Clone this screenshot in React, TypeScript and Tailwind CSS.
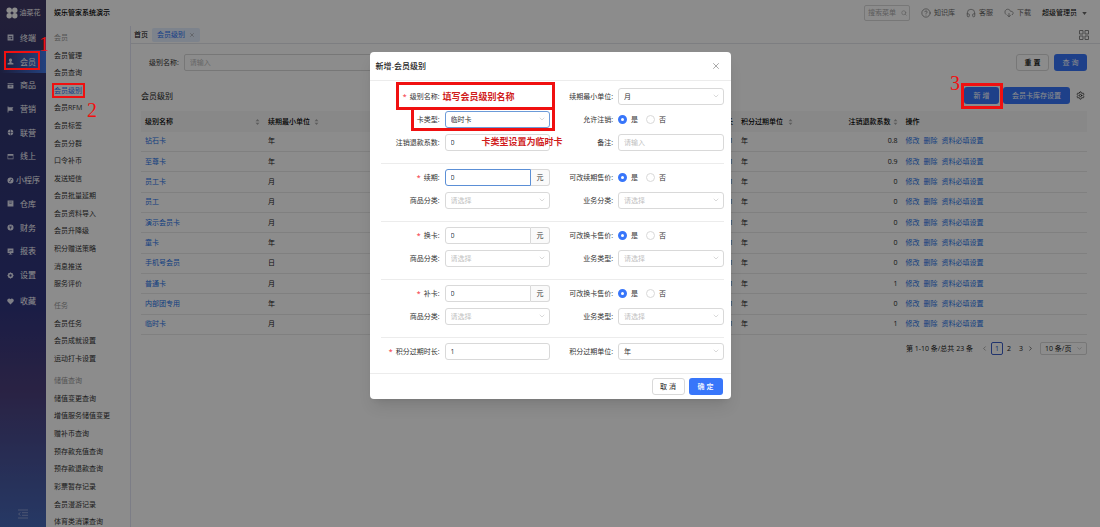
import { useState } from "react";
import type { ReactNode } from "react";
import clsx from "clsx";
import {
  ChevronDown,
  ChevronLeft,
  ChevronRight,
  CircleHelp,
  CloudDownload,
  Headphones,
  Search,
  Settings,
  X,
} from "lucide-react";

const railItems = [
  { name: "终端", icon: <path d="M1 1h10v10H1zM3 3.5v1h6v-1zM3 6v3h1V6zM6 6v3h3V6z" fillRule="evenodd" /> },
  { name: "会员", icon: <path d="M6 1a2.7 2.7 0 0 1 1.5 5v1.5L11 9v2H1V9l3.500-1.500V6A2.700 2.700 0 0 1 6 1z" /> },
  { name: "商品", icon: <path d="M1 2h10v2H1zM1 5h10v6H1zM4 6.500v1h4v-1z" fillRule="evenodd" /> },
  { name: "营销", icon: <path d="M1 1h1.500v1H11L9 5l2 3H2.500v3H1z" /> },
  { name: "联营", icon: <path d="M5.500 1v4.500H1A5 5 0 0 1 5.500 1zM6.500 1A5 5 0 0 1 11 5.500H6.500zM1 6.500h4.500V11A5 5 0 0 1 1 6.500zM6.500 6.500H11A5 5 0 0 1 6.500 11z" /> },
  { name: "线上", icon: <path d="M1 1.500h10v9H1zM2 4.500v5h8v-5z" fillRule="evenodd" /> },
  { name: "小程序", icon: <path d="M6 .8a5.200 5.200 0 1 1 0 10.400A5.200 5.200 0 0 1 6 .8zM8.500 3C6 3 6 5 5.500 6.500S4 8 3.500 7.500V9C6 9 6 7.500 6.500 6S8 4.500 8.500 4.500z" fillRule="evenodd" /> },
  { name: "仓库", icon: <path d="M1 1h10v10H1zM3 3v1h6V3zM4 6v1h4V6z" fillRule="evenodd" /> },
  { name: "财务", icon: <path d="M6 .8a5.200 5.200 0 1 1 0 10.400A5.200 5.200 0 0 1 6 .8zM3.500 3l2 2.500H4v1h1.500V9h1V6.500H8v-1H6.500l2-2.500h-1L6 4.800 4.500 3z" fillRule="evenodd" /> },
  { name: "报表", icon: <path d="M1 1h10v7.500H7V10h2v1H3v-1h2V8.500H1zM3 5v1.500L5.500 5 7 6l2.500-2.500h-1L7 4.800 5.500 3.800z" fillRule="evenodd" /> },
  { name: "设置", icon: <path d="M6 .5l1.500 1.300 2-.1.500 2L11.500 6 10 8l-.5 2-2 .1L6 11.500l-1.500-1.400-2-.1L2 8 .5 6 2 4l.5-2.200 2 .1zM6 4a2 2 0 1 0 0 4 2 2 0 0 0 0-4z" fillRule="evenodd" /> },
];

const menuMember = [
  "会员管理",
  "会员查询",
  "会员级别",
  "会员RFM",
  "会员标签",
  "会员分群",
  "口令补币",
  "发送短信",
  "会员批量延期",
  "会员资料导入",
  "会员升降级",
  "积分赠送策略",
  "消息推送",
  "服务评价",
];

const menuTask = ["会员任务", "会员成就设置", "运动打卡设置"];

const menuStored = [
  "储值变更查询",
  "增值服务储值变更",
  "赠补币查询",
  "预存款充值查询",
  "预存款退款查询",
  "彩票暂存记录",
  "会员漫游记录",
  "体育类消课查询",
];

const levels = [
  { id: 1, name: "钻石卡", unit: "年", rate: "0.8" },
  { id: 2, name: "至尊卡", unit: "年", rate: "0.9" },
  { id: 3, name: "员工卡", unit: "月", rate: "0" },
  { id: 4, name: "员工", unit: "月", rate: "0" },
  { id: 5, name: "演示会员卡", unit: "月", rate: "0" },
  { id: 6, name: "童卡", unit: "年", rate: "0" },
  { id: 7, name: "手机号会员", unit: "日", rate: "0" },
  { id: 8, name: "普通卡", unit: "月", rate: "1" },
  { id: 9, name: "内部团专用", unit: "年", rate: "0" },
  { id: 10, name: "临时卡", unit: "月", rate: "1" },
];

function MenuLink({ name }: { name: string }) {
  return (
    <li className="flex items-center">
      <a
        href="#"
        className={clsx(
          "whitespace-nowrap",
          name === "会员级别" ? "text-[#2b74f5]" : "text-[#333]",
        )}
      >
        {name}
      </a>
    </li>
  );
}

function MenuTitle({ children }: { children: ReactNode }) {
  return (
    <h2 className="flex h-[18px] items-center text-[#999]">{children}</h2>
  );
}

function Rail() {
  return (
    <nav className="flex w-[46px] shrink-0 flex-col bg-[linear-gradient(to_bottom,#413a66,#30356f_18%,#30357f_58%,#4c3f7c_74%,#4668b8)] text-[8px] text-white">
      <div className="flex h-[26px] items-center justify-center gap-0.5 text-[7px]">
        <svg viewBox="0 0 12 12" className="size-3 fill-white" aria-hidden="true">
          <circle cx="3.200" cy="3.200" r="2.700" />
          <circle cx="8.800" cy="3.200" r="2.700" />
          <circle cx="3.200" cy="8.800" r="2.700" />
          <circle cx="8.800" cy="8.800" r="2.700" />
        </svg>
        油菜花
      </div>
      <ul className="grid h-[261px] auto-rows-fr">
        {railItems.map((item) => (
          <li key={item.name}>
            <a
              href="#"
              className={clsx(
                "flex h-full items-center pl-[7px] whitespace-nowrap",
                item.name.length > 2 ? "gap-0.5" : "gap-[6px]",
                item.name === "会员" &&
                  "bg-linear-to-r from-transparent to-[#4078e8]",
              )}
            >
              <svg viewBox="0 0 12 12" className="size-[7px] shrink-0 fill-[#e4e6f4]" aria-hidden="true">
                {item.icon}
              </svg>
              {item.name}
            </a>
          </li>
        ))}
      </ul>
      <a href="#" className="mt-0.5 flex h-6 items-center gap-[6px] pl-[7px]">
        <svg viewBox="0 0 12 12" className="size-[7px] fill-[#e4e6f4]" aria-hidden="true">
          <path d="M6 11L1.300 6.300A3 3 0 0 1 6 2.200a3 3 0 0 1 4.700 4.100z" />
        </svg>
        收藏
      </a>
      <button className="mt-auto mb-2 ml-[18px] size-[10px]" aria-label="收起菜单">
        <svg viewBox="0 0 10 10" className="size-full stroke-[#8c9cd0]" fill="none">
          <path d="M0 1h10M4 3.700h6M4 6.300h6M0 9h10M2.500 3.500L.5 5l2 1.500" />
        </svg>
      </button>
    </nav>
  );
}

function SubMenu() {
  return (
    <nav className="w-[85px] shrink-0 border-r border-[#e2e4f4] pt-[3px] pl-2">
      <MenuTitle>会员</MenuTitle>
      <ul className="grid h-[246px] auto-rows-fr">
        {menuMember.map((name) => (
          <MenuLink key={name} name={name} />
        ))}
      </ul>
      <div className="mt-1">
        <MenuTitle>任务</MenuTitle>
      </div>
      <ul className="grid h-[53px] auto-rows-fr">
        {menuTask.map((name) => (
          <MenuLink key={name} name={name} />
        ))}
      </ul>
      <div className="mt-1">
        <MenuTitle>储值查询</MenuTitle>
      </div>
      <ul className="grid h-[141px] auto-rows-fr">
        {menuStored.map((name) => (
          <MenuLink key={name} name={name} />
        ))}
      </ul>
    </nav>
  );
}

function TopBar() {
  return (
    <header className="flex h-[26px] shrink-0 items-center justify-between pr-[13px] pl-2">
      <h1 className="font-medium text-black">娱乐管家系统演示</h1>
      <div className="flex items-center gap-[11px] text-[#666]">
        <div className="flex h-4 w-[46px] items-center rounded-xs border border-[#d9d9d9] pr-0.5 pl-[3px]">
          <input
            aria-label="搜索菜单"
            placeholder="搜索菜单"
            className="w-full min-w-0 placeholder:text-[#aaa]"
          />
          <Search className="size-[6px] shrink-0 text-[#999]" />
        </div>
        <a href="#" className="flex items-center gap-[3px]">
          <CircleHelp className="size-[10px]" strokeWidth={1.5} />
          知识库
        </a>
        <a href="#" className="flex items-center gap-[3px]">
          <Headphones className="size-[10px]" strokeWidth={1.5} />
          客服
        </a>
        <a href="#" className="flex items-center gap-[3px]">
          <CloudDownload className="size-[10px]" strokeWidth={1.5} />
          下载
        </a>
        <button className="flex items-center gap-[5px] text-black">
          超级管理员
          <svg viewBox="0 0 6 4" className="h-[3px] w-[5px] fill-[#666]" aria-hidden="true">
            <path d="M0 0h6L3 4z" />
          </svg>
        </button>
      </div>
    </header>
  );
}

function TabBar() {
  return (
    <div className="flex h-[18px] shrink-0 items-center gap-1 border-b border-[#e4e6ec] pr-[11px] pl-[3px]">
      <a href="#" className="text-black">
        首页
      </a>
      <div className="flex h-[14px] items-center gap-1 rounded-xs bg-[#e4eeff] px-[5px] text-[#2b74f5]">
        <a href="#">会员级别</a>
        <button aria-label="关闭会员级别">
          <X className="size-[6px] text-[#888]" />
        </button>
      </div>
      <button className="ml-auto" aria-label="全部标签">
        <svg viewBox="0 0 10 10" className="size-[10px] stroke-[#888]" fill="none">
          <path d="M.5.5h3.500V4H.5zM6 .5h3.500V4H6zM.5 6h3.500v3.500H.5zM6 6h3.500v3.500H6z" />
        </svg>
      </button>
    </div>
  );
}

function SortIcon() {
  return (
    <svg viewBox="0 0 6 8" className="h-[6px] w-[5px] fill-[#aaa]" aria-hidden="true">
      <path d="M3 0l2.500 3h-5zM3 8L.5 5h5z" />
    </svg>
  );
}

function LevelTable() {
  return (
    <table className="mt-[7px] h-[224px] w-full table-fixed text-left text-[#222]">
      <colgroup>
        <col className="w-[13%]" />
        <col className="w-[14%]" />
        <col className="w-[36%]" />
        <col className="w-[8%]" />
        <col className="w-[9.4%]" />
        <col />
      </colgroup>
      <thead>
        <tr className="h-[21px] bg-[#f7f7f7] text-black *:px-1 *:font-medium">
          <th>
            <span className="flex items-center justify-between">
              级别名称
              <SortIcon />
            </span>
          </th>
          <th>
            <span className="flex items-center gap-1">
              续期最小单位
              <SortIcon />
            </span>
          </th>
          <th className="text-right">积分过期时长</th>
          <th>
            <span className="flex items-center gap-[5px] whitespace-nowrap">
              积分过期单位
              <SortIcon />
            </span>
          </th>
          <th>
            <span className="flex items-center justify-end gap-0.5 whitespace-nowrap">
              注销退款系数
              <SortIcon />
            </span>
          </th>
          <th>操作</th>
        </tr>
      </thead>
      <tbody>
        {levels.map((level) => (
          <tr key={level.id} className="border-b border-[#eaeaea] *:px-1">
            <td>
              <a href="#" className="text-[#2472ea]">
                {level.name}
              </a>
            </td>
            <td>{level.unit}</td>
            <td className="text-right">1</td>
            <td>年</td>
            <td className="text-right">{level.rate}</td>
            <td>
              <div className="flex gap-1 text-[#2472ea]">
                <a href="#">修改</a>
                <a href="#">删除</a>
                <a href="#">资料必填设置</a>
              </div>
            </td>
          </tr>
        ))}
      </tbody>
    </table>
  );
}

function Pagination() {
  return (
    <div className="mt-[7px] flex items-center justify-end text-[#222]">
      <span className="mr-2">第 1-10 条/总共 23 条</span>
      <button aria-label="上一页">
        <ChevronLeft className="size-[7px] text-[#777]" />
      </button>
      <button className="ml-[3px] h-[13px] w-3 rounded-xs border border-[#3d5fc8] text-[#2b50c0]">
        1
      </button>
      <button className="h-[13px] w-3">2</button>
      <button className="h-[13px] w-3">3</button>
      <button aria-label="下一页" className="mr-[6px]">
        <ChevronRight className="size-[7px]" />
      </button>
      <div className="relative">
        <select
          aria-label="每页条数"
          className="h-[13px] w-[47px] appearance-none rounded-xs border border-[#d9d9d9] pl-1"
        >
          <option>10 条/页</option>
          <option>20 条/页</option>
        </select>
        <ChevronDown className="pointer-events-none absolute top-[3px] right-1 size-[7px] text-[#aaa]" />
      </div>
    </div>
  );
}

function LevelPage() {
  return (
    <main className="flex-1 pt-[10px] pr-[13px] pl-[10px]">
      <div className="flex items-center gap-[5px] pl-2">
        <label htmlFor="search-name" className="text-[#333]">
          级别名称:
        </label>
        <input
          id="search-name"
          placeholder="请输入"
          className="h-[17px] w-[200px] rounded-xs border border-[#d9d9d9] px-[5px] placeholder:text-[#bbb]"
        />
        <button className="ml-auto h-[17px] w-[33px] rounded-[3px] border border-[#d9d9d9] font-medium text-black">
          重 置
        </button>
        <button className="h-[17px] w-[33px] rounded-[3px] bg-[#3876fa] text-white">
          查 询
        </button>
      </div>
      <div className="mt-4 flex items-center gap-1">
        <h2 className="mr-auto text-[8px] text-[#222]">会员级别</h2>
        <button className="h-[17px] w-[35px] rounded-[3px] bg-[#3876fa] text-white">
          新 增
        </button>
        <button className="h-[17px] w-[67px] rounded-[3px] bg-[#3876fa] text-white">
          会员卡库存设置
        </button>
        <button aria-label="列设置" className="mr-0.5 ml-[2px]">
          <Settings className="size-[9px] text-[#222]" />
        </button>
      </div>
      <LevelTable />
      <Pagination />
    </main>
  );
}

type FieldProps = {
  id?: string;
  label: string;
  required?: boolean;
  children: ReactNode;
};

function Field({ id, label, required, children }: FieldProps) {
  return (
    <div className="flex h-[17px] items-center gap-[5px]">
      <label
        htmlFor={id}
        className="w-[63px] shrink-0 text-right whitespace-nowrap"
      >
        {required && <span className="mr-[3px] text-[#f5222d]">*</span>}
        {label}:
      </label>
      {children}
    </div>
  );
}

type SelectBoxProps = {
  id: string;
  options?: string[];
  active?: boolean;
};

function SelectBox({ id, options, active }: SelectBoxProps) {
  return (
    <div className="relative flex-1">
      <select
        id={id}
        className={clsx(
          "block h-[17px] w-full appearance-none rounded-[3px] border bg-white px-[5px]",
          active ? "border-[#6c9bd8]" : "border-[#d9d9d9]",
          !options && "text-[#bfbfbf]",
        )}
      >
        {options ? (
          options.map((option) => <option key={option}>{option}</option>)
        ) : (
          <option value="">请选择</option>
        )}
      </select>
      <ChevronDown
        className="pointer-events-none absolute top-1 right-1 size-2 text-[#b5b5b5]"
        strokeWidth={1.5}
      />
    </div>
  );
}

function PriceInput({ id, active }: { id: string; active?: boolean }) {
  return (
    <div className="flex flex-1">
      <input
        id={id}
        defaultValue="0"
        className={clsx(
          "h-[17px] w-full min-w-0 rounded-l-[3px] border px-[5px]",
          active ? "border-[#5b8fd6]" : "border-[#d9d9d9]",
        )}
      />
      <span className="flex w-[19px] shrink-0 items-center justify-center rounded-r-[3px] border border-l-0 border-[#d9d9d9] bg-[#fafafa]">
        元
      </span>
    </div>
  );
}

function YesNo({ name }: { name: string }) {
  const [value, setValue] = useState("是");

  return (
    <div className="flex gap-2">
      {["是", "否"].map((option) => (
        <label key={option} className="flex items-center gap-1">
          <input
            type="radio"
            name={name}
            checked={value === option}
            onChange={() => setValue(option)}
            className="size-[9px] appearance-none rounded-full border border-[#d9d9d9] checked:border-[3px] checked:border-[#3876fa]"
          />
          {option}
        </label>
      ))}
    </div>
  );
}

function Divider() {
  return <hr className="mt-3 mb-[5px] ml-1 border-[#ececec]" />;
}

function LevelDialog() {
  return (
    <div
      role="dialog"
      aria-labelledby="dialog-title"
      className="relative w-[361px] rounded-sm bg-white text-[#333] shadow-lg"
    >
      <div className="flex h-[29px] items-center justify-between border-b border-[#ececec] pr-[10px] pl-[6px]">
        <h2 id="dialog-title" className="text-[8px] font-medium text-[#222]">
          新增-会员级别
        </h2>
        <button aria-label="关闭">
          <X className="size-[10px] text-[#777]" strokeWidth={1.5} />
        </button>
      </div>
      <form className="px-[7px] pt-[7px] pb-[13px]">
        <div className="grid grid-cols-2 gap-y-[6px]">
          <Field id="name" label="级别名称" required>
            <input id="name" className="h-[17px] w-full min-w-0 px-[5px]" />
          </Field>
          <Field id="renew-unit" label="续期最小单位">
            <SelectBox id="renew-unit" options={["月", "年", "日"]} />
          </Field>
          <Field id="card-type" label="卡类型">
            <SelectBox id="card-type" options={["临时卡", "会员卡"]} active />
          </Field>
          <Field label="允许注销">
            <YesNo name="allow-cancel" />
          </Field>
          <Field id="refund-rate" label="注销退款系数">
            <input
              id="refund-rate"
              defaultValue="0"
              className="h-[17px] w-full min-w-0 rounded-[3px] border border-[#d9d9d9] px-[5px]"
            />
          </Field>
          <Field id="remark" label="备注">
            <input
              id="remark"
              placeholder="请输入"
              className="h-[17px] w-full min-w-0 rounded-[3px] border border-[#d9d9d9] px-[5px] placeholder:text-[#bfbfbf]"
            />
          </Field>
        </div>
        <Divider />
        <div className="grid grid-cols-2 gap-y-[6px]">
          <Field id="renew-price" label="续期" required>
            <PriceInput id="renew-price" active />
          </Field>
          <Field label="可改续期售价">
            <YesNo name="renew-editable" />
          </Field>
          <Field id="renew-goods" label="商品分类">
            <SelectBox id="renew-goods" />
          </Field>
          <Field id="renew-business" label="业务分类">
            <SelectBox id="renew-business" />
          </Field>
        </div>
        <Divider />
        <div className="grid grid-cols-2 gap-y-[6px]">
          <Field id="change-price" label="换卡" required>
            <PriceInput id="change-price" />
          </Field>
          <Field label="可改换卡售价">
            <YesNo name="change-editable" />
          </Field>
          <Field id="change-goods" label="商品分类">
            <SelectBox id="change-goods" />
          </Field>
          <Field id="change-business" label="业务类型">
            <SelectBox id="change-business" />
          </Field>
        </div>
        <Divider />
        <div className="grid grid-cols-2 gap-y-[6px]">
          <Field id="reissue-price" label="补卡" required>
            <PriceInput id="reissue-price" />
          </Field>
          <Field label="可改换卡售价">
            <YesNo name="reissue-editable" />
          </Field>
          <Field id="reissue-goods" label="商品分类">
            <SelectBox id="reissue-goods" />
          </Field>
          <Field id="reissue-business" label="业务类型">
            <SelectBox id="reissue-business" />
          </Field>
        </div>
        <Divider />
        <div className="grid grid-cols-2">
          <Field id="expire-length" label="积分过期时长" required>
            <input
              id="expire-length"
              defaultValue="1"
              className="h-[17px] w-full min-w-0 rounded-[3px] border border-[#d9d9d9] px-[5px]"
            />
          </Field>
          <Field id="expire-unit" label="积分过期单位">
            <SelectBox id="expire-unit" options={["年", "月"]} />
          </Field>
        </div>
      </form>
      <div className="flex justify-end gap-1 border-t border-[#ececec] px-2 py-1">
        <button className="h-[17px] w-[33px] rounded-[3px] border border-[#d9d9d9] text-[#222]">
          取 消
        </button>
        <button className="h-[17px] w-[34px] rounded-[3px] bg-[#3876fa] font-medium text-white">
          确 定
        </button>
      </div>

      {/* step marks on the form */}
      <div className="pointer-events-none absolute top-[30px] left-[26px] h-7 w-[159px] border-[3px] border-[#f01010]" />
      <div className="pointer-events-none absolute top-[55px] left-[41px] h-6 w-[144px] border-[3px] border-[#f01010]" />
      <p className="pointer-events-none absolute top-[39px] left-[73px] text-[9px] leading-3 font-bold text-[#d01c1c]">
        填写会员级别名称
      </p>
      <p className="pointer-events-none absolute top-[84px] left-[112px] text-[9px] leading-3 font-bold text-[#d01c1c]">
        卡类型设置为临时卡
      </p>
    </div>
  );
}

export default function App() {
  return (
    <div className="relative flex h-screen overflow-hidden bg-white font-['Open_Sans','Noto_Sans_CJK_SC',sans-serif] text-[7px] leading-[10px]">
      <Rail />
      <div className="flex min-w-0 flex-1 flex-col">
        <TopBar />
        <div className="flex min-h-0 flex-1">
          <SubMenu />
          <div className="flex min-w-0 flex-1 flex-col">
            <TabBar />
            <LevelPage />
          </div>
        </div>
      </div>

      <div className="absolute inset-0 flex items-start justify-center bg-black/45 pt-[52px]">
        <LevelDialog />
      </div>

      {/* numbered steps */}
      <div className="pointer-events-none absolute inset-0 font-['Liberation_Serif',serif] text-[20px] leading-5 text-[#f01010]">
        <span className="absolute top-[34px] left-[39px]">1</span>
        <div className="absolute top-[51px] left-1 h-[19px] w-9 border-2 border-[#f01010]" />
        <div className="absolute top-[83px] left-[52px] h-[15px] w-[33px] border-2 border-[#f01010]" />
        <span className="absolute top-[100px] left-[87px]">2</span>
        <span className="absolute top-[73px] right-[140px]">3</span>
        <div className="absolute top-[83px] right-[97px] h-[26px] w-[42px] border-[3px] border-[#f01010]" />
      </div>
    </div>
  );
}
